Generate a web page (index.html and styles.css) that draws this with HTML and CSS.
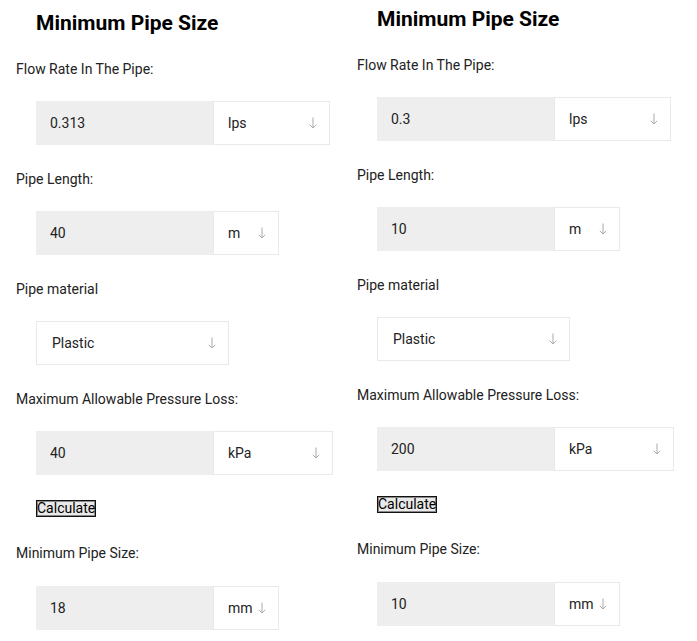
FILE: index.html
```html
<!DOCTYPE html>
<html lang="en">
<head>
<meta charset="utf-8">
<title>Minimum Pipe Size</title>
<link rel="stylesheet" href="styles.css">
</head>
<body>
<main class="page">
  <section class="calc calc--a">
    <h2 class="calc__title">Minimum Pipe Size</h2>

    <label class="calc__label">Flow Rate In The Pipe:</label>
    <div class="calc__row">
      <input class="calc__input" type="text" value="0.313">
      <div class="calc__select calc__select--lps"><span>lps</span><svg class="calc__arrow" viewBox="0 0 8 12" width="8" height="12"><path d="M4 0.5V11M0.8 7.8L4 11L7.2 7.8"/></svg></div>
    </div>

    <label class="calc__label">Pipe Length:</label>
    <div class="calc__row">
      <input class="calc__input" type="text" value="40">
      <div class="calc__select calc__select--m"><span>m</span><svg class="calc__arrow" viewBox="0 0 8 12" width="8" height="12"><path d="M4 0.5V11M0.8 7.8L4 11L7.2 7.8"/></svg></div>
    </div>

    <label class="calc__label">Pipe material</label>
    <div class="calc__row">
      <div class="calc__select calc__select--material"><span>Plastic</span><svg class="calc__arrow" viewBox="0 0 8 12" width="8" height="12"><path d="M4 0.5V11M0.8 7.8L4 11L7.2 7.8"/></svg></div>
    </div>

    <label class="calc__label">Maximum Allowable Pressure Loss:</label>
    <div class="calc__row">
      <input class="calc__input" type="text" value="40">
      <div class="calc__select calc__select--kpa"><span>kPa</span><svg class="calc__arrow" viewBox="0 0 8 12" width="8" height="12"><path d="M4 0.5V11M0.8 7.8L4 11L7.2 7.8"/></svg></div>
    </div>

    <div class="calc__actions"><button class="calc__button" type="button">Calculate</button></div>

    <label class="calc__label">Minimum Pipe Size:</label>
    <div class="calc__row calc__row--last">
      <input class="calc__input" type="text" value="18">
      <div class="calc__select calc__select--m"><span>mm</span><svg class="calc__arrow" viewBox="0 0 8 12" width="8" height="12"><path d="M4 0.5V11M0.8 7.8L4 11L7.2 7.8"/></svg></div>
    </div>
  </section>

  <section class="calc calc--b">
    <h2 class="calc__title">Minimum Pipe Size</h2>

    <label class="calc__label">Flow Rate In The Pipe:</label>
    <div class="calc__row">
      <input class="calc__input" type="text" value="0.3">
      <div class="calc__select calc__select--lps"><span>lps</span><svg class="calc__arrow" viewBox="0 0 8 12" width="8" height="12"><path d="M4 0.5V11M0.8 7.8L4 11L7.2 7.8"/></svg></div>
    </div>

    <label class="calc__label">Pipe Length:</label>
    <div class="calc__row">
      <input class="calc__input" type="text" value="10">
      <div class="calc__select calc__select--m"><span>m</span><svg class="calc__arrow" viewBox="0 0 8 12" width="8" height="12"><path d="M4 0.5V11M0.8 7.8L4 11L7.2 7.8"/></svg></div>
    </div>

    <label class="calc__label">Pipe material</label>
    <div class="calc__row">
      <div class="calc__select calc__select--material"><span>Plastic</span><svg class="calc__arrow" viewBox="0 0 8 12" width="8" height="12"><path d="M4 0.5V11M0.8 7.8L4 11L7.2 7.8"/></svg></div>
    </div>

    <label class="calc__label">Maximum Allowable Pressure Loss:</label>
    <div class="calc__row">
      <input class="calc__input" type="text" value="200">
      <div class="calc__select calc__select--kpa"><span>kPa</span><svg class="calc__arrow" viewBox="0 0 8 12" width="8" height="12"><path d="M4 0.5V11M0.8 7.8L4 11L7.2 7.8"/></svg></div>
    </div>

    <div class="calc__actions"><button class="calc__button" type="button">Calculate</button></div>

    <label class="calc__label">Minimum Pipe Size:</label>
    <div class="calc__row calc__row--last">
      <input class="calc__input" type="text" value="10">
      <div class="calc__select calc__select--m"><span>mm</span><svg class="calc__arrow" viewBox="0 0 8 12" width="8" height="12"><path d="M4 0.5V11M0.8 7.8L4 11L7.2 7.8"/></svg></div>
    </div>
  </section>
</main>
</body>
</html>
```
FILE: styles.css
```css
* { box-sizing: border-box; }

html, body {
  margin: 0;
  background: #ffffff;
}

body {
  font-family: Roboto, "Liberation Sans", Arial, sans-serif;
  color: #222222;
}

.page {
  display: flex;
  align-items: flex-start;
}

.calc {
  width: 341px;
  padding-left: 16px;
  display: flex;
  flex-direction: column;
  align-items: flex-start;
}

.calc--a { padding-top: 11px; }
.calc--b { padding-top: 7px; }

.calc__title {
  margin: 0 0 24px 20px;
  font-size: 21px;
  line-height: 24px;
  font-weight: 700;
  color: #000000;
}

.calc__label {
  display: block;
  font-size: 14px;
  line-height: 20px;
  color: #222222;
}

.calc__row {
  display: flex;
  height: 44px;
  margin: 22px 0 24px 20px;
}

.calc__row--last { margin-top: 23px; }

.calc__input {
  width: 177px;
  height: 44px;
  margin: 0;
  padding: 0 0 0 14px;
  border: 0;
  background: #eeeeee;
  font-family: inherit;
  font-size: 14px;
  color: #222222;
  outline: none;
}

.calc__select {
  position: relative;
  display: flex;
  align-items: center;
  height: 44px;
  padding-left: 14px;
  border: 1px solid #e9e9e9;
  background: #ffffff;
  font-size: 14px;
  color: #222222;
}

.calc__select--lps { width: 117px; }
.calc__select--m { width: 66px; }
.calc__select--kpa { width: 120px; }
.calc__select--material { width: 193px; padding-left: 15px; }

.calc__arrow {
  position: absolute;
  right: 12px;
  top: 15px;
  fill: none;
  stroke: #aaaaaa;
  stroke-width: 1;
}

.calc__actions {
  margin: 1px 0 26px 20px;
}

.calc__button {
  display: block;
  height: 17px;
  margin: 0;
  padding: 0;
  border: 1px solid #111111;
  box-shadow: inset 0 0 0 1px #8a8a8a;
  border-radius: 0;
  background: #e9e9e9;
  font-family: Roboto, "Liberation Sans", Arial, sans-serif;
  font-size: 14px;
  line-height: 15px;
  color: #000000;
}
```
